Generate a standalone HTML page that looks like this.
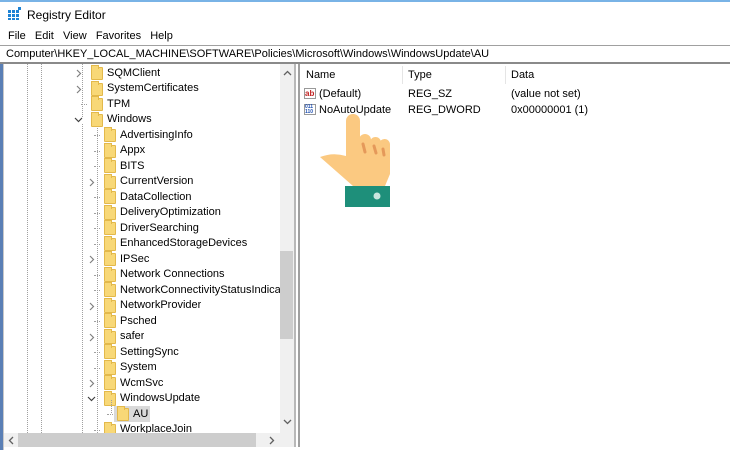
<!DOCTYPE html>
<html><head><meta charset="utf-8"><style>
*{margin:0;padding:0;box-sizing:border-box}
body{width:730px;height:450px;overflow:hidden;background:#fff;font-family:"Liberation Sans",sans-serif;font-size:11px;color:#000;position:relative}
.a{position:absolute;white-space:nowrap}
.f{position:absolute;width:12px;height:13px;background:#f8d877;border:1px solid #e3b94b;border-radius:1px}
.f:before{content:"";position:absolute;left:-1px;top:-3px;width:6px;height:3px;background:#f8d877;border:1px solid #e3b94b;border-bottom:none}
.r{position:absolute;height:15px;line-height:15px}
.vl{position:absolute;border-left:1px dotted #a0a0a0;width:0}
.hl{position:absolute;border-top:1px dotted #a0a0a0;height:0;width:6px}
.ch{position:absolute}
</style></head><body>
<div class="a" style="left:0;top:0;width:730px;height:2px;background:#79b3e6"></div>
<svg class="a" style="left:8px;top:7px" width="14" height="13"><g fill="#1e82d4"><rect x="0" y="3" width="3" height="3"/><rect x="4" y="3" width="3" height="3"/><rect x="8" y="3" width="3" height="3"/><rect x="0" y="7" width="3" height="3"/><rect x="4" y="7" width="3" height="3"/><rect x="8" y="7" width="3" height="3"/><rect x="0" y="11" width="3" height="2"/><rect x="4" y="11" width="3" height="2"/><rect x="8" y="11" width="3" height="2"/><rect x="10" y="0" width="3" height="3"/></g></svg>
<div class="a" style="left:27px;top:8px;font-size:12px">Registry Editor</div>
<div class="a" style="left:8px;top:30px;font-size:11px;word-spacing:0">File&nbsp;&nbsp;&nbsp;Edit&nbsp;&nbsp;&nbsp;View&nbsp;&nbsp;&nbsp;Favorites&nbsp;&nbsp;&nbsp;Help</div>
<div class="a" style="left:0;top:45px;width:730px;height:1px;background:#a0a0a0"></div>
<div class="a" style="left:6px;top:48px;font-size:11px">Computer\HKEY_LOCAL_MACHINE\SOFTWARE\Policies\Microsoft\Windows\WindowsUpdate\AU</div>
<div class="a" style="left:0;top:62px;width:730px;height:2px;background:#8a8a8a"></div>
<div class="a" style="left:0;top:64px;width:3px;height:386px;background:#5a7fb5"></div>
<div class="a" style="left:3px;top:64px;width:1px;height:386px;background:#c8c8c8"></div>
<div class="vl" style="left:27px;top:64px;height:369px"></div>
<div class="vl" style="left:41px;top:64px;height:369px"></div>
<div class="vl" style="left:82px;top:64px;height:369px"></div>
<div class="vl" style="left:97px;top:128px;height:305px"></div>
<div id="tree"></div>
<!-- scrollbars -->
<div class="a" style="left:280px;top:64px;width:14px;height:369px;background:#f0f0f0"></div>
<div class="a" style="left:280px;top:251px;width:13px;height:88px;background:#cdcdcd"></div>
<svg class="a" style="left:283px;top:70px" width="9" height="6"><path d="M1 5 L4.5 1.5 L8 5" stroke="#606060" stroke-width="1.3" fill="none"/></svg>
<svg class="a" style="left:283px;top:419px" width="9" height="6"><path d="M1 1 L4.5 4.5 L8 1" stroke="#606060" stroke-width="1.3" fill="none"/></svg>
<div class="a" style="left:4px;top:433px;width:290px;height:14px;background:#f0f0f0"></div>
<div class="a" style="left:18px;top:433px;width:238px;height:14px;background:#cdcdcd"></div>
<svg class="a" style="left:8px;top:436px" width="6" height="9"><path d="M5 1 L1.5 4.5 L5 8" stroke="#606060" stroke-width="1.3" fill="none"/></svg>
<svg class="a" style="left:269px;top:436px" width="6" height="9"><path d="M1 1 L4.5 4.5 L1 8" stroke="#606060" stroke-width="1.3" fill="none"/></svg>
<div class="a" style="left:294px;top:64px;width:2px;height:386px;background:#b8b8b8"></div>
<div class="a" style="left:296px;top:64px;width:2px;height:386px;background:#fff"></div>
<div class="a" style="left:298px;top:64px;width:2px;height:386px;background:#a0a0a0"></div>
<!-- right pane -->
<div class="a" style="left:402px;top:66px;width:1px;height:18px;background:#e5e5e5"></div>
<div class="a" style="left:505px;top:66px;width:1px;height:18px;background:#e5e5e5"></div>
<div class="a" style="left:306px;top:69px">Name</div>
<div class="a" style="left:408px;top:69px">Type</div>
<div class="a" style="left:511px;top:69px">Data</div>
<div class="a" style="left:304px;top:88px;width:12px;height:11px;border:1px solid #999;font-size:8px;color:#c02020;line-height:9px;font-weight:bold;background:#fff">ab</div>
<div class="a" style="left:319px;top:88px">(Default)</div>
<div class="a" style="left:408px;top:88px">REG_SZ</div>
<div class="a" style="left:511px;top:88px">(value not set)</div>
<div class="a" style="left:304px;top:104px;width:12px;height:11px;border:1px solid #999;font-size:5px;color:#2050b0;line-height:5px;font-weight:bold;background:#fff">011<br>110</div>
<div class="a" style="left:319px;top:104px">NoAutoUpdate</div>
<div class="a" style="left:408px;top:104px">REG_DWORD</div>
<div class="a" style="left:511px;top:104px">0x00000001 (1)</div>
<!-- hand -->
<svg class="a" style="left:315px;top:112px" width="90" height="95">
<rect x="31" y="2" width="14" height="55" rx="7" fill="#fbc981"/>
<rect x="44" y="22" width="12" height="34" rx="6" fill="#fbc981"/>
<rect x="55" y="25" width="11" height="30" rx="5.5" fill="#fbc981"/>
<rect x="64" y="27" width="11" height="30" rx="5.5" fill="#fbc981"/>
<path d="M5 45 Q18 40 31 44 L75 42 L75 62 L70 74 L38 74 Z" fill="#fbc981"/>
<path d="M48 32 l2 8 M59 34 l2 7 M68 37 l1 6" stroke="#e5995a" stroke-width="3" stroke-linecap="round"/>
<rect x="30" y="74" width="45" height="21" fill="#1e8f7a"/>
<circle cx="62" cy="84" r="3.5" fill="#c9e6df"/>
</svg>
<script>
var rows=[
[0,"SQMClient",1,">"],[0,"SystemCertificates",1,">"],[0,"TPM",1,"-"],[0,"Windows",1,"v"],
[1,"AdvertisingInfo",0,"-"],[1,"Appx",0,"-"],[1,"BITS",0,"-"],[1,"CurrentVersion",0,">"],[1,"DataCollection",0,"-"],[1,"DeliveryOptimization",0,"-"],[1,"DriverSearching",0,"-"],[1,"EnhancedStorageDevices",0,"-"],[1,"IPSec",0,">"],[1,"Network Connections",0,"-"],[1,"NetworkConnectivityStatusIndicator",0,"-"],[1,"NetworkProvider",0,">"],[1,"Psched",0,"-"],[1,"safer",0,">"],[1,"SettingSync",0,"-"],[1,"System",0,"-"],[1,"WcmSvc",0,">"],[1,"WindowsUpdate",0,"v"],[2,"AU",0,"-"],[1,"WorkplaceJoin",0,"-"]];
var h="";
rows.forEach(function(r,i){var t=65+15.5*i;var fx=r[0]==0?91:(r[0]==1?104:117);var lx=fx-14;
if(r[3]==">")h+='<svg class="ch" style="left:'+(lx-1)+'px;top:'+(t+4)+'px;background:#fff" width="6" height="9"><path d="M1 1 L4.5 4.5 L1 8" stroke="#808080" stroke-width="1.2" fill="none"/></svg>';
else if(r[3]=="v")h+='<svg class="ch" style="left:'+(lx-3)+'px;top:'+(t+5)+'px;background:#fff" width="9" height="6"><path d="M1 1 L4.5 4.5 L8 1" stroke="#404040" stroke-width="1.2" fill="none"/></svg>';
else h+='<div class="hl" style="left:'+(lx+4)+'px;top:'+(t+8)+'px"></div>';
if(r[1]=="AU")h+='<div class="a" style="left:114px;top:'+(t)+'px;width:36px;height:16px;background:#d9d9d9"></div><div class="vl" style="left:111px;top:'+(t-6)+'px;height:13px"></div>';
h+='<div class="f" style="left:'+fx+'px;top:'+(t+2)+'px"></div>';
h+='<div class="r" style="left:'+(fx+16)+'px;top:'+(t+0.5)+'px;max-width:'+(280-fx-16)+'px;overflow:hidden">'+r[1]+'</div>';});
document.getElementById("tree").innerHTML=h;
</script>
<div class="a" style="left:4px;top:447px;width:726px;height:3px;background:#fff"></div>
</body></html>
